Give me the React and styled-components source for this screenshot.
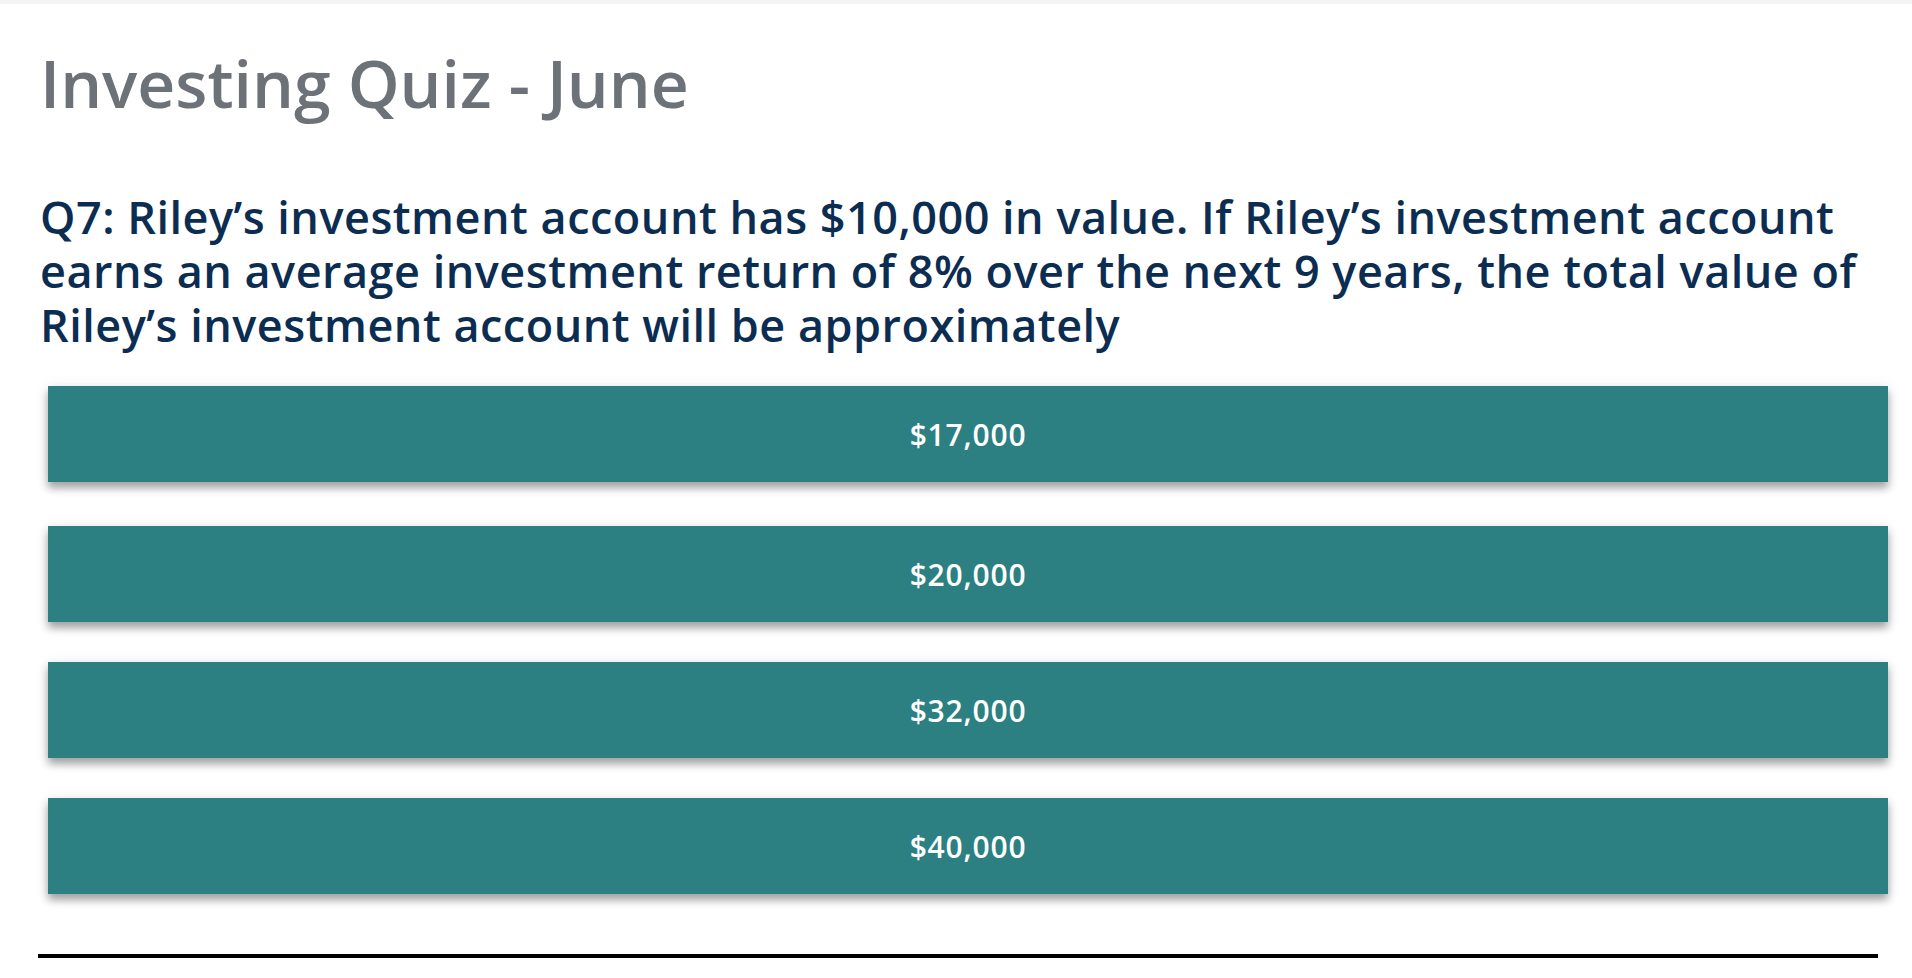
import React from 'react';
import styled, { createGlobalStyle } from 'styled-components';

const GlobalStyle = createGlobalStyle`
    html, body { margin: 0; padding: 0; background: #ffffff; }
    body { font-family: "Open Sans", "Liberation Sans", sans-serif; }
`

const TopStrip = styled.div`
    height: 4px; background-color: #f4f4f4;
`

const Page = styled.main`
    width: 1840px; margin-left: 38px;
    padding-top: 39px;
`

const Title = styled.h1`
    margin: 0 0 0 2px; font-size: 66px; font-weight: 600; line-height: 1.2;
    color: #6d7278;
`

const Question = styled.h2`
    margin: 68px 0 34px 2px; font-size: 45px; font-weight: 600; line-height: 54px;
    letter-spacing: 0.5px; color: #0c2d52;
`

const Answers = styled.div`
    display: flex; flex-direction: column; gap: 40px;
`

const Answer = styled.button`
    display: block; width: 100%; height: 96px; margin-left: 10px; flex-shrink: 0;
    border: 0; border-radius: 0; cursor: pointer;
    background-color: #2c8081; color: #ffffff;
    font-family: "Open Sans", "Liberation Sans", sans-serif; font-size: 30px; font-weight: 600;
    letter-spacing: 0.8px;
    box-shadow: 0 6px 8px rgba(0,0,0,0.32), 0 2px 14px rgba(0,0,0,0.1);
    &:first-child { margin-bottom: 4px; }
`

const Divider = styled.hr`
    margin: 60px 0 0 0; border: 0; height: 4px; background-color: #000000;
`

const choices = ['$17,000', '$20,000', '$32,000', '$40,000'];

function App() {
    return (
        <>
            <GlobalStyle />
            <TopStrip />
            <Page>
                <Title>Investing Quiz - June</Title>
                <Question>
                    Q7: Riley’s investment account has $10,000 in value. If Riley’s investment account earns an average investment return of 8% over the next 9 years, the total value of Riley’s investment account will be approximately
                </Question>
                <Answers>
                    {choices.map(c => <Answer key={c}>{c}</Answer>)}
                </Answers>
                <Divider />
            </Page>
        </>
    );
}

export default App;
